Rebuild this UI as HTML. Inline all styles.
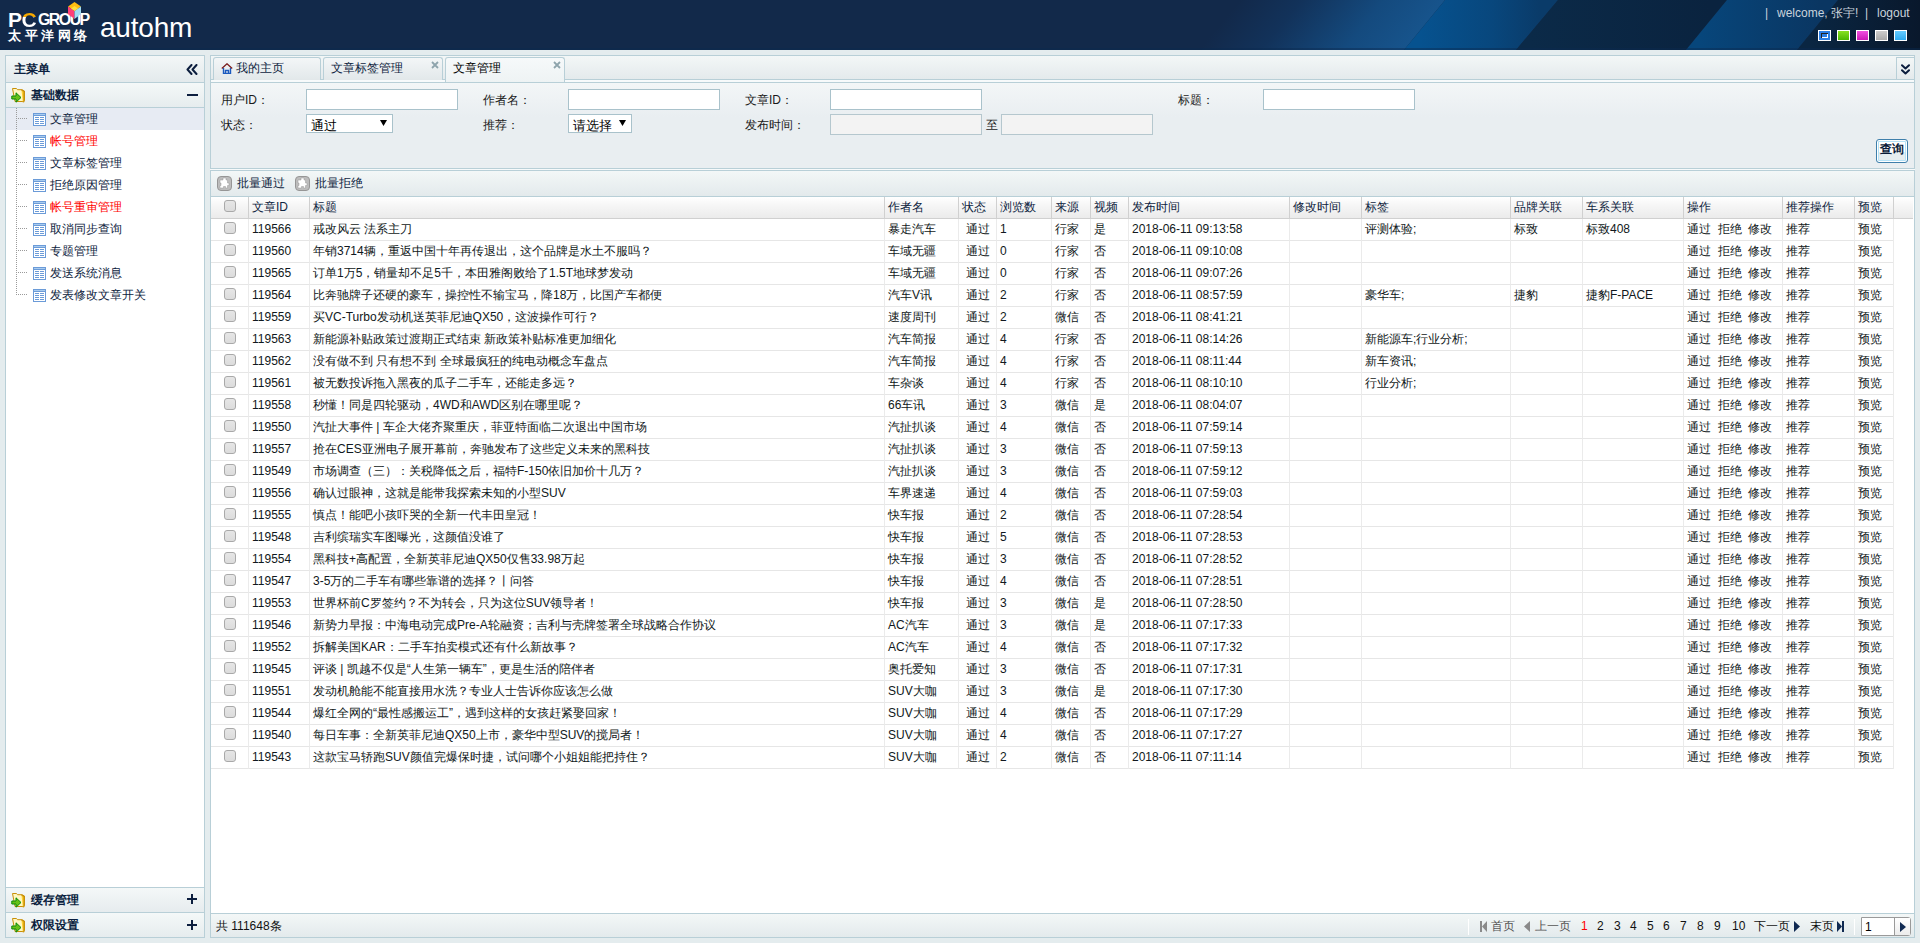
<!DOCTYPE html><html><head><meta charset="utf-8"><title>autohm</title><style>*{margin:0;padding:0;box-sizing:border-box}
html,body{width:1920px;height:943px;overflow:hidden}
body{position:relative;background:#e4ecee;font-family:"Liberation Sans",sans-serif;font-size:12px;color:#000}
i,em{display:block;font-style:normal}
svg{display:block}
#hdr{position:absolute;left:0;top:0;width:1920px;height:50px;overflow:hidden;background:#12284a}
#hdr .bg{position:absolute;left:0;top:0;width:1920px;height:49px}
#hdr .app{position:absolute;left:100px;top:10px;font-size:28px;color:#fff;line-height:36px;letter-spacing:-0.2px}
#hdr .top{position:absolute;top:5px;color:#c9d3dc;font-size:12px;line-height:16px;white-space:nowrap}
#hdr .sw{position:absolute;top:30px;width:13px;height:11px;border:1px solid #fff}
#side{position:absolute;left:5px;top:55px;width:200px;height:883px;border:1px solid #b8cfd7;background:#fff}
.side-title{position:absolute;left:0;top:0;width:198px;height:27px;border-bottom:1px solid #b8cfd7;background:linear-gradient(#f3f7f7,#e3eaec)}
.side-title span{position:absolute;left:8px;top:6px;color:#0b1f3f;line-height:14px;font-weight:bold}
.sec{position:absolute;left:0;width:198px;height:25px;border-bottom:1px solid #b8cfd7;background:linear-gradient(#f4f8f8,#e6ecee)}
.sec b{position:absolute;left:25px;top:5px;color:#0b1f3f;line-height:14px;font-weight:bold}
.sec.top1{top:27px}
.sec.bot1{top:831px;border-top:1px solid #b8cfd7;height:26px}
.sec.bot1 svg{top:4px}
.sec.bot1 b{top:5px}
.sec.bot1 i{margin-top:-1px}
.sec.bot2{top:857px;height:24px;border-bottom:0}
.tree{position:absolute;left:0;top:52px;width:198px}
.vdots{position:absolute;left:10px;top:0;width:1px;height:187px;background:repeating-linear-gradient(#9a9a9a 0,#9a9a9a 1px,transparent 1px,transparent 2px);z-index:2}
.hdots{position:absolute;left:10px;top:10px;width:11px;height:1px;background:repeating-linear-gradient(90deg,#9a9a9a 0,#9a9a9a 1px,transparent 1px,transparent 2px)}
.it{position:relative;height:22px}
.it.sel{background:#e7ebf3}
.it span{position:absolute;left:44px;top:4px;line-height:14px;color:#0e2440;white-space:nowrap}
.it span.red{color:#ff0000}
#tabs{position:absolute;left:210px;top:55px;width:1705px;height:25px;border:1px solid #b8cfd7;background:linear-gradient(#f3f7f7,#e4eaec)}
#tabgap{position:absolute;left:210px;top:80px;width:1705px;height:2px;background:#f7fafb;border-left:1px solid #b8cfd7;border-right:1px solid #b8cfd7}
.tab{position:absolute;top:1px;height:23px;border:1px solid #b8cfd7;border-bottom:0;border-radius:3px 3px 0 0;background:linear-gradient(#f3f6f7,#e2e8ea);color:#0e2440}
.tab span{position:absolute;top:3px;line-height:14px;white-space:nowrap}
.tab.act{background:linear-gradient(#f6f9fa,#eef3f4);height:25px;z-index:2}
.tabdd{position:absolute;right:0;top:1px;width:18px;height:22px;border-left:1px solid #b8cfd7;border-top:1px solid #b8cfd7;background:linear-gradient(#f3f7f7,#e4eaec)}
#form{position:absolute;left:210px;top:82px;width:1705px;height:87px;border:1px solid #b8cfd7;background:linear-gradient(#f3f6f7,#e9eef1 40%,#e9eef1)}
#form .lb{position:absolute;line-height:14px;color:#1a1a1a;white-space:nowrap}
#form .in{position:absolute;width:152px;height:21px;border:1px solid #a9c2cb;background:#fff}
#form .in.dis{background:#f3f3f3;border-color:#b5c7ce}
#form .sel{position:absolute;height:19px;border:1px solid #a9c2cb;background:#fff}
#form .sel span{position:absolute;left:4px;top:3px;line-height:15px;font-size:13px}
#form .btn{position:absolute;left:1665px;top:56px;width:32px;height:24px;border:1px solid #3f7fab;border-radius:3px;box-shadow:inset 0 0 0 1px #fff,inset 0 0 0 2px #b5e2f7;background:linear-gradient(#ffffff,#ffffff 55%,#e6edf0 56%,#e6edf0)}
#form .btn span{position:absolute;left:3px;top:2px;line-height:14px;color:#0a1a38;font-weight:bold}
#gap2{position:absolute;left:210px;top:169px;width:1705px;height:1px;background:#f7fafb}
#grid{position:absolute;left:210px;top:170px;width:1705px;height:768px;border:1px solid #b8cfd7;background:#fff;overflow:hidden}
.tb{position:absolute;left:0;top:0;width:1703px;height:26px;border-bottom:1px solid #b8cfd7;background:linear-gradient(#f3f7f7,#e3eaec)}
.tbb{position:absolute;top:5px;height:17px;white-space:nowrap;color:#0e2440}
.tbb em{position:absolute;left:20px;top:0;line-height:14px}
table{border-collapse:separate;border-spacing:0;table-layout:fixed;position:absolute;left:-1px}
.gh{top:26px}
.gh td{height:22px;border-left:1px solid #d0d0d0;border-bottom:1px solid #d0d0d0;background:linear-gradient(#ffffff,#f6f6f6 40%,#ebebeb);padding:0 0 0 3px;line-height:21px;white-space:nowrap;overflow:hidden;color:#0e2440}
.gb{top:48px}
.gb td{height:22px;border-left:1px solid #ebebeb;border-bottom:1px solid #e6e6e6;padding:0 0 0 3px;line-height:21px;white-space:nowrap;overflow:hidden;color:#101820}
.gb td.last{border-bottom:0;border-left:1px solid #ebebeb}
.gb td.ctr{text-align:center;padding:0}
td.c0{border-left:0 !important;padding:0 !important;vertical-align:top}
.cb{margin:3px 0 0 14px;width:12px;height:12px;border:1px solid #a9a9a9;border-radius:3px;background:linear-gradient(#e6e6e6,#dcdcdc)}
#foot{position:absolute;left:0;bottom:0;width:1703px;height:24px;border-top:1px solid #b8cfd7;background:linear-gradient(#f3f7f7,#e3eaec)}
#foot .tot{position:absolute;left:5px;top:5px;line-height:14px;color:#111}
#foot .pg{position:absolute;top:5px;line-height:14px;white-space:nowrap;color:#111}
#foot .psep{position:absolute;top:5px;width:1px;height:16px;background:#b8cfd7;border-right:1px solid #fff}
#foot .go{position:absolute;left:1650px;top:3px;width:50px;height:19px;border:1px solid #9a9a9a;border-radius:0 3px 3px 0;background:#fff}
#foot .go span{position:absolute;left:3px;top:2px;line-height:14px}
#foot .gob{position:absolute;left:32px;top:0;width:16px;height:17px;border-left:1px solid #9a9a9a;background:linear-gradient(#fff,#ececec)}
</style></head><body><div id="hdr">
<svg width="1920" height="50" viewBox="0 0 1920 50" style="position:absolute;left:0;top:0">
<defs>
<linearGradient id="g0" x1="1240" y1="0" x2="1364" y2="101" gradientUnits="userSpaceOnUse"><stop offset="0" stop-color="#12294a"/><stop offset="0.3" stop-color="#12325a"/><stop offset="0.7" stop-color="#144a7e"/><stop offset="1" stop-color="#17548c"/></linearGradient>
<linearGradient id="g1" x1="1420" y1="0" x2="1540" y2="0" gradientUnits="userSpaceOnUse"><stop offset="0" stop-color="#06528f"/><stop offset="0.6" stop-color="#08477d"/><stop offset="1" stop-color="#0a3b69"/></linearGradient>
<linearGradient id="g2" x1="1530" y1="0" x2="1710" y2="0" gradientUnits="userSpaceOnUse"><stop offset="0" stop-color="#0b2a48"/><stop offset="1" stop-color="#0a233f"/></linearGradient>
<linearGradient id="g3" x1="1700" y1="0" x2="1820" y2="0" gradientUnits="userSpaceOnUse"><stop offset="0" stop-color="#07467b"/><stop offset="1" stop-color="#0a3662"/></linearGradient>
<linearGradient id="g4" x1="1810" y1="0" x2="1920" y2="0" gradientUnits="userSpaceOnUse"><stop offset="0" stop-color="#0a2642"/><stop offset="1" stop-color="#09182c"/></linearGradient>
</defs>
<rect x="0" y="0" width="1920" height="50" fill="#12294a"/>
<polygon points="1200,0 1445,0 1404,50 1200,50" fill="url(#g0)"/>
<polygon points="1445,0 1558,0 1516,50 1404,50" fill="url(#g1)"/>
<polygon points="1558,0 1727,0 1686,50 1516,50" fill="url(#g2)"/>
<polygon points="1727,0 1838,0 1797,50 1686,50" fill="url(#g3)"/>
<polygon points="1838,0 1920,0 1920,50 1797,50" fill="url(#g4)"/>
<rect x="0" y="48" width="1920" height="2" fill="#0a2a50" opacity="0.45"/>
</svg>
<span style="position:absolute;left:8px;top:8px;font-size:21px;font-weight:bold;color:#fff;line-height:24px;white-space:nowrap;letter-spacing:-0.5px">P<span style="background:linear-gradient(#f5a800 0,#f5a800 40%,#fff 40%);-webkit-background-clip:text;color:transparent">C</span></span>
<span style="position:absolute;left:38px;top:10px;font-size:16px;font-weight:bold;color:#fff;line-height:20px;letter-spacing:-1.6px;white-space:nowrap">GROUP</span>
<svg width="14" height="18" viewBox="0 0 14 18" style="position:absolute;left:68px;top:1px"><polygon points="6.5,1 13,5.5 6.5,10 0,5.5" fill="#ffbe10"/><polygon points="0,5.5 6.5,10 6.5,18 0,13" fill="#ff3f78"/><polygon points="13,5.5 13,13 6.5,18 6.5,10" fill="#9fdcf5"/><polygon points="3,7.5 6.5,10 10,7.5 6.5,5" fill="#ffe040"/></svg>
<span style="position:absolute;left:8px;top:29px;font-size:13px;font-weight:bold;color:#fff;letter-spacing:3.5px;line-height:14px;white-space:nowrap">太平洋网络</span>
<div class="app">autohm</div>
<span class="top" style="left:1765px">|</span>
<span class="top" style="left:1777px">welcome, 张宇!</span>
<span class="top" style="left:1865px">|</span>
<span class="top" style="left:1877px">logout</span>
<i class="sw" style="left:1818px;background:#2a7ee6"><i style="position:absolute;left:2px;top:2px;width:7px;height:5px;border-left:1px solid #222;border-top:1px solid #222;background:#fff"></i><i style="position:absolute;left:3px;top:3px;width:5px;height:3px;background:#2a7ee6"></i></i>
<i class="sw" style="left:1837px;background:linear-gradient(#88e020,#4cb800)"></i>
<i class="sw" style="left:1856px;background:linear-gradient(#f050e0,#cc18b8)"></i>
<i class="sw" style="left:1875px;background:linear-gradient(#cccccc,#a8a8a8)"></i>
<i class="sw" style="left:1894px;background:linear-gradient(#66ccff,#2eaaf0)"></i>
</div>
<div id="side"><div class="side-title"><span>主菜单</span><svg width="12" height="11" viewBox="0 0 12 11" style="position:absolute;left:180px;top:8px"><path d="M5.5 1L1.5 5.5 5.5 10M10.5 1L6.5 5.5 10.5 10" fill="none" stroke="#0c1e3e" stroke-width="2" stroke-linecap="round" stroke-linejoin="round"/></svg></div><div class="sec top1"><svg width="16" height="16" viewBox="0 0 16 16" style="position:absolute;left:5px;top:4px"><path d="M1.5 1.5h4l1 1.2h4.5l2.5 1.3v9.5c0 .8-.6 1-1.5 1h-8z" fill="#fff7c0" stroke="#c8900a" stroke-width="1"/><path d="M10.5 3l2.5 1.5v9.5c0 .6-.5 1-1.2 1" fill="#ffd030" stroke="#c8900a" stroke-width="1.2"/><path d="M0.8 9h4.2v-3.2l5 4.7-5 4.7v-3.2h-4.2z" fill="#66c018" stroke="#0a8a0a" stroke-width="1"/></svg><b>基础数据</b><i style="position:absolute;left:181px;top:11px;width:11px;height:2px;background:#0c1e3e"></i></div><div class="tree"><i class="vdots"></i><div class="it sel"><i class="hdots"></i><svg width="13" height="13" viewBox="0 0 13 13" shape-rendering="crispEdges" style="position:absolute;left:27px;top:5px"><rect x="0" y="0" width="13" height="13" fill="#6b9bd8"/><rect x="1" y="1" width="11" height="1" fill="#a9ccf0"/><rect x="1" y="3" width="11" height="9" fill="#fff"/><g fill="#6b9bd8"><rect x="2" y="4" width="4" height="1"/><rect x="7" y="4" width="4" height="1"/><rect x="2" y="6" width="4" height="1"/><rect x="7" y="6" width="4" height="1"/><rect x="2" y="8" width="4" height="1"/><rect x="7" y="8" width="4" height="1"/><rect x="2" y="10" width="4" height="1"/><rect x="7" y="10" width="4" height="1"/></g></svg><span>文章管理</span></div><div class="it"><i class="hdots"></i><svg width="13" height="13" viewBox="0 0 13 13" shape-rendering="crispEdges" style="position:absolute;left:27px;top:5px"><rect x="0" y="0" width="13" height="13" fill="#6b9bd8"/><rect x="1" y="1" width="11" height="1" fill="#a9ccf0"/><rect x="1" y="3" width="11" height="9" fill="#fff"/><g fill="#6b9bd8"><rect x="2" y="4" width="4" height="1"/><rect x="7" y="4" width="4" height="1"/><rect x="2" y="6" width="4" height="1"/><rect x="7" y="6" width="4" height="1"/><rect x="2" y="8" width="4" height="1"/><rect x="7" y="8" width="4" height="1"/><rect x="2" y="10" width="4" height="1"/><rect x="7" y="10" width="4" height="1"/></g></svg><span class="red">帐号管理</span></div><div class="it"><i class="hdots"></i><svg width="13" height="13" viewBox="0 0 13 13" shape-rendering="crispEdges" style="position:absolute;left:27px;top:5px"><rect x="0" y="0" width="13" height="13" fill="#6b9bd8"/><rect x="1" y="1" width="11" height="1" fill="#a9ccf0"/><rect x="1" y="3" width="11" height="9" fill="#fff"/><g fill="#6b9bd8"><rect x="2" y="4" width="4" height="1"/><rect x="7" y="4" width="4" height="1"/><rect x="2" y="6" width="4" height="1"/><rect x="7" y="6" width="4" height="1"/><rect x="2" y="8" width="4" height="1"/><rect x="7" y="8" width="4" height="1"/><rect x="2" y="10" width="4" height="1"/><rect x="7" y="10" width="4" height="1"/></g></svg><span>文章标签管理</span></div><div class="it"><i class="hdots"></i><svg width="13" height="13" viewBox="0 0 13 13" shape-rendering="crispEdges" style="position:absolute;left:27px;top:5px"><rect x="0" y="0" width="13" height="13" fill="#6b9bd8"/><rect x="1" y="1" width="11" height="1" fill="#a9ccf0"/><rect x="1" y="3" width="11" height="9" fill="#fff"/><g fill="#6b9bd8"><rect x="2" y="4" width="4" height="1"/><rect x="7" y="4" width="4" height="1"/><rect x="2" y="6" width="4" height="1"/><rect x="7" y="6" width="4" height="1"/><rect x="2" y="8" width="4" height="1"/><rect x="7" y="8" width="4" height="1"/><rect x="2" y="10" width="4" height="1"/><rect x="7" y="10" width="4" height="1"/></g></svg><span>拒绝原因管理</span></div><div class="it"><i class="hdots"></i><svg width="13" height="13" viewBox="0 0 13 13" shape-rendering="crispEdges" style="position:absolute;left:27px;top:5px"><rect x="0" y="0" width="13" height="13" fill="#6b9bd8"/><rect x="1" y="1" width="11" height="1" fill="#a9ccf0"/><rect x="1" y="3" width="11" height="9" fill="#fff"/><g fill="#6b9bd8"><rect x="2" y="4" width="4" height="1"/><rect x="7" y="4" width="4" height="1"/><rect x="2" y="6" width="4" height="1"/><rect x="7" y="6" width="4" height="1"/><rect x="2" y="8" width="4" height="1"/><rect x="7" y="8" width="4" height="1"/><rect x="2" y="10" width="4" height="1"/><rect x="7" y="10" width="4" height="1"/></g></svg><span class="red">帐号重审管理</span></div><div class="it"><i class="hdots"></i><svg width="13" height="13" viewBox="0 0 13 13" shape-rendering="crispEdges" style="position:absolute;left:27px;top:5px"><rect x="0" y="0" width="13" height="13" fill="#6b9bd8"/><rect x="1" y="1" width="11" height="1" fill="#a9ccf0"/><rect x="1" y="3" width="11" height="9" fill="#fff"/><g fill="#6b9bd8"><rect x="2" y="4" width="4" height="1"/><rect x="7" y="4" width="4" height="1"/><rect x="2" y="6" width="4" height="1"/><rect x="7" y="6" width="4" height="1"/><rect x="2" y="8" width="4" height="1"/><rect x="7" y="8" width="4" height="1"/><rect x="2" y="10" width="4" height="1"/><rect x="7" y="10" width="4" height="1"/></g></svg><span>取消同步查询</span></div><div class="it"><i class="hdots"></i><svg width="13" height="13" viewBox="0 0 13 13" shape-rendering="crispEdges" style="position:absolute;left:27px;top:5px"><rect x="0" y="0" width="13" height="13" fill="#6b9bd8"/><rect x="1" y="1" width="11" height="1" fill="#a9ccf0"/><rect x="1" y="3" width="11" height="9" fill="#fff"/><g fill="#6b9bd8"><rect x="2" y="4" width="4" height="1"/><rect x="7" y="4" width="4" height="1"/><rect x="2" y="6" width="4" height="1"/><rect x="7" y="6" width="4" height="1"/><rect x="2" y="8" width="4" height="1"/><rect x="7" y="8" width="4" height="1"/><rect x="2" y="10" width="4" height="1"/><rect x="7" y="10" width="4" height="1"/></g></svg><span>专题管理</span></div><div class="it"><i class="hdots"></i><svg width="13" height="13" viewBox="0 0 13 13" shape-rendering="crispEdges" style="position:absolute;left:27px;top:5px"><rect x="0" y="0" width="13" height="13" fill="#6b9bd8"/><rect x="1" y="1" width="11" height="1" fill="#a9ccf0"/><rect x="1" y="3" width="11" height="9" fill="#fff"/><g fill="#6b9bd8"><rect x="2" y="4" width="4" height="1"/><rect x="7" y="4" width="4" height="1"/><rect x="2" y="6" width="4" height="1"/><rect x="7" y="6" width="4" height="1"/><rect x="2" y="8" width="4" height="1"/><rect x="7" y="8" width="4" height="1"/><rect x="2" y="10" width="4" height="1"/><rect x="7" y="10" width="4" height="1"/></g></svg><span>发送系统消息</span></div><div class="it"><i class="hdots"></i><svg width="13" height="13" viewBox="0 0 13 13" shape-rendering="crispEdges" style="position:absolute;left:27px;top:5px"><rect x="0" y="0" width="13" height="13" fill="#6b9bd8"/><rect x="1" y="1" width="11" height="1" fill="#a9ccf0"/><rect x="1" y="3" width="11" height="9" fill="#fff"/><g fill="#6b9bd8"><rect x="2" y="4" width="4" height="1"/><rect x="7" y="4" width="4" height="1"/><rect x="2" y="6" width="4" height="1"/><rect x="7" y="6" width="4" height="1"/><rect x="2" y="8" width="4" height="1"/><rect x="7" y="8" width="4" height="1"/><rect x="2" y="10" width="4" height="1"/><rect x="7" y="10" width="4" height="1"/></g></svg><span>发表修改文章开关</span></div></div><div class="sec bot1"><svg width="16" height="16" viewBox="0 0 16 16" style="position:absolute;left:5px;top:4px"><path d="M1.5 1.5h4l1 1.2h4.5l2.5 1.3v9.5c0 .8-.6 1-1.5 1h-8z" fill="#fff7c0" stroke="#c8900a" stroke-width="1"/><path d="M10.5 3l2.5 1.5v9.5c0 .6-.5 1-1.2 1" fill="#ffd030" stroke="#c8900a" stroke-width="1.2"/><path d="M0.8 9h4.2v-3.2l5 4.7-5 4.7v-3.2h-4.2z" fill="#66c018" stroke="#0a8a0a" stroke-width="1"/></svg><b>缓存管理</b><i style="position:absolute;left:181px;top:11px;width:10px;height:2px;background:#0c1e3e"></i><i style="position:absolute;left:185px;top:7px;width:2px;height:10px;background:#0c1e3e"></i></div><div class="sec bot2"><svg width="16" height="16" viewBox="0 0 16 16" style="position:absolute;left:5px;top:4px"><path d="M1.5 1.5h4l1 1.2h4.5l2.5 1.3v9.5c0 .8-.6 1-1.5 1h-8z" fill="#fff7c0" stroke="#c8900a" stroke-width="1"/><path d="M10.5 3l2.5 1.5v9.5c0 .6-.5 1-1.2 1" fill="#ffd030" stroke="#c8900a" stroke-width="1.2"/><path d="M0.8 9h4.2v-3.2l5 4.7-5 4.7v-3.2h-4.2z" fill="#66c018" stroke="#0a8a0a" stroke-width="1"/></svg><b>权限设置</b><i style="position:absolute;left:181px;top:11px;width:10px;height:2px;background:#0c1e3e"></i><i style="position:absolute;left:185px;top:7px;width:2px;height:10px;background:#0c1e3e"></i></div></div><div id="tabs"><div class="tab" style="left:2px;width:108px"><svg width="12" height="11" viewBox="0 0 12 11" style="position:absolute;left:7px;top:5px"><path d="M0.8 5.6L6 0.8 11.2 5.6" fill="none" stroke="#7a1c1c" stroke-width="1.3"/><path d="M2.5 5v5.5h7V5M4.5 10.5V7.5h3v3" fill="none" stroke="#1a5abf" stroke-width="1.4"/></svg><span style="left:22px">我的主页</span></div><div class="tab" style="left:112px;width:120px"><span style="left:7px">文章标签管理</span><svg width="8" height="8" viewBox="0 0 8 8" style="position:absolute;right:3px;top:3px"><path d="M1 1L7 7M7 1L1 7" stroke="#8ea4ac" stroke-width="1.8"/></svg></div><div class="tab act" style="left:234px;width:120px"><span style="left:7px;color:#000">文章管理</span><svg width="8" height="8" viewBox="0 0 8 8" style="position:absolute;right:3px;top:3px"><path d="M1 1L7 7M7 1L1 7" stroke="#8ea4ac" stroke-width="1.8"/></svg></div><div class="tabdd"><svg width="9" height="11" viewBox="0 0 9 11" style="position:absolute;left:4px;top:6px"><path d="M1 1.2L4.5 4.5 8 1.2M1 6.2L4.5 9.5 8 6.2" fill="none" stroke="#0c1e3e" stroke-width="2" stroke-linecap="round" stroke-linejoin="round"/></svg></div></div><div id="tabgap"></div><div id="form">
<span class="lb" style="left:10px;top:10px">用户ID：</span>
<i class="in" style="left:95px;top:6px"></i>
<span class="lb" style="left:272px;top:10px">作者名：</span>
<i class="in" style="left:357px;top:6px"></i>
<span class="lb" style="left:534px;top:10px">文章ID：</span>
<i class="in" style="left:619px;top:6px"></i>
<span class="lb" style="left:967px;top:10px">标题：</span>
<i class="in" style="left:1052px;top:6px"></i>
<span class="lb" style="left:10px;top:35px">状态：</span>
<div class="sel" style="left:95px;top:31px;width:87px"><span>通过</span><svg width="7" height="6" viewBox="0 0 7 6" style="position:absolute;top:5px;right:5px"><path d="M0 0h7L3.5 6z" fill="#000"/></svg></div>
<span class="lb" style="left:272px;top:35px">推荐：</span>
<div class="sel" style="left:357px;top:31px;width:64px"><span>请选择</span><svg width="7" height="6" viewBox="0 0 7 6" style="position:absolute;top:5px;right:5px"><path d="M0 0h7L3.5 6z" fill="#000"/></svg></div>
<span class="lb" style="left:534px;top:35px">发布时间：</span>
<i class="in dis" style="left:619px;top:31px"></i>
<span class="lb" style="left:775px;top:35px">至</span>
<i class="in dis" style="left:790px;top:31px"></i>
<div class="btn"><span>查询</span></div>
</div>
<div id="gap2"></div>
<div id="grid"><div class="tb"><span class="tbb" style="left:6px"><svg width="15" height="15" viewBox="0 0 15 15" style="position:absolute;left:0;top:0"><rect x="0.5" y="0.5" width="14" height="14" rx="3.5" fill="#bdbdbd" stroke="#969696"/><path d="M3 4H6V2H9V4H10.5V7H12V9.5H10.5V12H8.5V10.5H6.5V12H3V9.5H4V7H3Z" fill="#fff" stroke="#9a9a9a" stroke-width="0.5"/></svg><em>批量通过</em></span><span class="tbb" style="left:84px"><svg width="15" height="15" viewBox="0 0 15 15" style="position:absolute;left:0;top:0"><rect x="0.5" y="0.5" width="14" height="14" rx="3.5" fill="#bdbdbd" stroke="#969696"/><path d="M3 4H6V2H9V4H10.5V7H12V9.5H10.5V12H8.5V10.5H6.5V12H3V9.5H4V7H3Z" fill="#fff" stroke="#9a9a9a" stroke-width="0.5"/></svg><em>批量拒绝</em></span></div><table class="gh"><colgroup><col style="width:38px"><col style="width:61px"><col style="width:575px"><col style="width:74px"><col style="width:38px"><col style="width:55px"><col style="width:39px"><col style="width:38px"><col style="width:161px"><col style="width:72px"><col style="width:149px"><col style="width:72px"><col style="width:101px"><col style="width:99px"><col style="width:72px"><col style="width:39px"><col style="width:20px"></colgroup><tr><td class="c0"><i class="cb"></i></td><td>文章ID</td><td>标题</td><td>作者名</td><td>状态</td><td>浏览数</td><td>来源</td><td>视频</td><td>发布时间</td><td>修改时间</td><td>标签</td><td>品牌关联</td><td>车系关联</td><td>操作</td><td>推荐操作</td><td>预览</td><td class="lasth"></td></tr></table><table class="gb"><colgroup><col style="width:38px"><col style="width:61px"><col style="width:575px"><col style="width:74px"><col style="width:38px"><col style="width:55px"><col style="width:39px"><col style="width:38px"><col style="width:161px"><col style="width:72px"><col style="width:149px"><col style="width:72px"><col style="width:101px"><col style="width:99px"><col style="width:72px"><col style="width:39px"><col style="width:20px"></colgroup><tr><td class="c0"><i class="cb"></i></td><td>119566</td><td>戒改风云 法系主刀</td><td>暴走汽车</td><td class="ctr">通过</td><td>1</td><td>行家</td><td>是</td><td>2018-06-11 09:13:58</td><td></td><td>评测体验;</td><td>标致</td><td>标致408</td><td class="ops">通过&nbsp;&nbsp;拒绝&nbsp;&nbsp;修改</td><td>推荐</td><td>预览</td><td class="last"></td></tr><tr><td class="c0"><i class="cb"></i></td><td>119560</td><td>年销3714辆，重返中国十年再传退出，这个品牌是水土不服吗？</td><td>车域无疆</td><td class="ctr">通过</td><td>0</td><td>行家</td><td>否</td><td>2018-06-11 09:10:08</td><td></td><td></td><td></td><td></td><td class="ops">通过&nbsp;&nbsp;拒绝&nbsp;&nbsp;修改</td><td>推荐</td><td>预览</td><td class="last"></td></tr><tr><td class="c0"><i class="cb"></i></td><td>119565</td><td>订单1万5，销量却不足5千，本田雅阁败给了1.5T地球梦发动</td><td>车域无疆</td><td class="ctr">通过</td><td>0</td><td>行家</td><td>否</td><td>2018-06-11 09:07:26</td><td></td><td></td><td></td><td></td><td class="ops">通过&nbsp;&nbsp;拒绝&nbsp;&nbsp;修改</td><td>推荐</td><td>预览</td><td class="last"></td></tr><tr><td class="c0"><i class="cb"></i></td><td>119564</td><td>比奔驰牌子还硬的豪车，操控性不输宝马，降18万，比国产车都便</td><td>汽车V讯</td><td class="ctr">通过</td><td>2</td><td>行家</td><td>否</td><td>2018-06-11 08:57:59</td><td></td><td>豪华车;</td><td>捷豹</td><td>捷豹F-PACE</td><td class="ops">通过&nbsp;&nbsp;拒绝&nbsp;&nbsp;修改</td><td>推荐</td><td>预览</td><td class="last"></td></tr><tr><td class="c0"><i class="cb"></i></td><td>119559</td><td>买VC-Turbo发动机送英菲尼迪QX50，这波操作可行？</td><td>速度周刊</td><td class="ctr">通过</td><td>2</td><td>微信</td><td>否</td><td>2018-06-11 08:41:21</td><td></td><td></td><td></td><td></td><td class="ops">通过&nbsp;&nbsp;拒绝&nbsp;&nbsp;修改</td><td>推荐</td><td>预览</td><td class="last"></td></tr><tr><td class="c0"><i class="cb"></i></td><td>119563</td><td>新能源补贴政策过渡期正式结束 新政策补贴标准更加细化</td><td>汽车简报</td><td class="ctr">通过</td><td>4</td><td>行家</td><td>否</td><td>2018-06-11 08:14:26</td><td></td><td>新能源车;行业分析;</td><td></td><td></td><td class="ops">通过&nbsp;&nbsp;拒绝&nbsp;&nbsp;修改</td><td>推荐</td><td>预览</td><td class="last"></td></tr><tr><td class="c0"><i class="cb"></i></td><td>119562</td><td>没有做不到 只有想不到 全球最疯狂的纯电动概念车盘点</td><td>汽车简报</td><td class="ctr">通过</td><td>4</td><td>行家</td><td>否</td><td>2018-06-11 08:11:44</td><td></td><td>新车资讯;</td><td></td><td></td><td class="ops">通过&nbsp;&nbsp;拒绝&nbsp;&nbsp;修改</td><td>推荐</td><td>预览</td><td class="last"></td></tr><tr><td class="c0"><i class="cb"></i></td><td>119561</td><td>被无数投诉拖入黑夜的瓜子二手车，还能走多远？</td><td>车杂谈</td><td class="ctr">通过</td><td>4</td><td>行家</td><td>否</td><td>2018-06-11 08:10:10</td><td></td><td>行业分析;</td><td></td><td></td><td class="ops">通过&nbsp;&nbsp;拒绝&nbsp;&nbsp;修改</td><td>推荐</td><td>预览</td><td class="last"></td></tr><tr><td class="c0"><i class="cb"></i></td><td>119558</td><td>秒懂！同是四轮驱动，4WD和AWD区别在哪里呢？</td><td>66车讯</td><td class="ctr">通过</td><td>3</td><td>微信</td><td>是</td><td>2018-06-11 08:04:07</td><td></td><td></td><td></td><td></td><td class="ops">通过&nbsp;&nbsp;拒绝&nbsp;&nbsp;修改</td><td>推荐</td><td>预览</td><td class="last"></td></tr><tr><td class="c0"><i class="cb"></i></td><td>119550</td><td>汽扯大事件 | 车企大佬齐聚重庆，菲亚特面临二次退出中国市场</td><td>汽扯扒谈</td><td class="ctr">通过</td><td>4</td><td>微信</td><td>否</td><td>2018-06-11 07:59:14</td><td></td><td></td><td></td><td></td><td class="ops">通过&nbsp;&nbsp;拒绝&nbsp;&nbsp;修改</td><td>推荐</td><td>预览</td><td class="last"></td></tr><tr><td class="c0"><i class="cb"></i></td><td>119557</td><td>抢在CES亚洲电子展开幕前，奔驰发布了这些定义未来的黑科技</td><td>汽扯扒谈</td><td class="ctr">通过</td><td>3</td><td>微信</td><td>否</td><td>2018-06-11 07:59:13</td><td></td><td></td><td></td><td></td><td class="ops">通过&nbsp;&nbsp;拒绝&nbsp;&nbsp;修改</td><td>推荐</td><td>预览</td><td class="last"></td></tr><tr><td class="c0"><i class="cb"></i></td><td>119549</td><td>市场调查（三）：关税降低之后，福特F-150依旧加价十几万？</td><td>汽扯扒谈</td><td class="ctr">通过</td><td>3</td><td>微信</td><td>否</td><td>2018-06-11 07:59:12</td><td></td><td></td><td></td><td></td><td class="ops">通过&nbsp;&nbsp;拒绝&nbsp;&nbsp;修改</td><td>推荐</td><td>预览</td><td class="last"></td></tr><tr><td class="c0"><i class="cb"></i></td><td>119556</td><td>确认过眼神，这就是能带我探索未知的小型SUV</td><td>车界速递</td><td class="ctr">通过</td><td>4</td><td>微信</td><td>否</td><td>2018-06-11 07:59:03</td><td></td><td></td><td></td><td></td><td class="ops">通过&nbsp;&nbsp;拒绝&nbsp;&nbsp;修改</td><td>推荐</td><td>预览</td><td class="last"></td></tr><tr><td class="c0"><i class="cb"></i></td><td>119555</td><td>慎点！能吧小孩吓哭的全新一代丰田皇冠！</td><td>快车报</td><td class="ctr">通过</td><td>2</td><td>微信</td><td>否</td><td>2018-06-11 07:28:54</td><td></td><td></td><td></td><td></td><td class="ops">通过&nbsp;&nbsp;拒绝&nbsp;&nbsp;修改</td><td>推荐</td><td>预览</td><td class="last"></td></tr><tr><td class="c0"><i class="cb"></i></td><td>119548</td><td>吉利缤瑞实车图曝光，这颜值没谁了</td><td>快车报</td><td class="ctr">通过</td><td>5</td><td>微信</td><td>否</td><td>2018-06-11 07:28:53</td><td></td><td></td><td></td><td></td><td class="ops">通过&nbsp;&nbsp;拒绝&nbsp;&nbsp;修改</td><td>推荐</td><td>预览</td><td class="last"></td></tr><tr><td class="c0"><i class="cb"></i></td><td>119554</td><td>黑科技+高配置，全新英菲尼迪QX50仅售33.98万起</td><td>快车报</td><td class="ctr">通过</td><td>3</td><td>微信</td><td>否</td><td>2018-06-11 07:28:52</td><td></td><td></td><td></td><td></td><td class="ops">通过&nbsp;&nbsp;拒绝&nbsp;&nbsp;修改</td><td>推荐</td><td>预览</td><td class="last"></td></tr><tr><td class="c0"><i class="cb"></i></td><td>119547</td><td>3-5万的二手车有哪些靠谱的选择？丨问答</td><td>快车报</td><td class="ctr">通过</td><td>4</td><td>微信</td><td>否</td><td>2018-06-11 07:28:51</td><td></td><td></td><td></td><td></td><td class="ops">通过&nbsp;&nbsp;拒绝&nbsp;&nbsp;修改</td><td>推荐</td><td>预览</td><td class="last"></td></tr><tr><td class="c0"><i class="cb"></i></td><td>119553</td><td>世界杯前C罗签约？不为转会，只为这位SUV领导者！</td><td>快车报</td><td class="ctr">通过</td><td>3</td><td>微信</td><td>是</td><td>2018-06-11 07:28:50</td><td></td><td></td><td></td><td></td><td class="ops">通过&nbsp;&nbsp;拒绝&nbsp;&nbsp;修改</td><td>推荐</td><td>预览</td><td class="last"></td></tr><tr><td class="c0"><i class="cb"></i></td><td>119546</td><td>新势力早报：中海电动完成Pre-A轮融资；吉利与壳牌签署全球战略合作协议</td><td>AC汽车</td><td class="ctr">通过</td><td>3</td><td>微信</td><td>是</td><td>2018-06-11 07:17:33</td><td></td><td></td><td></td><td></td><td class="ops">通过&nbsp;&nbsp;拒绝&nbsp;&nbsp;修改</td><td>推荐</td><td>预览</td><td class="last"></td></tr><tr><td class="c0"><i class="cb"></i></td><td>119552</td><td>拆解美国KAR：二手车拍卖模式还有什么新故事？</td><td>AC汽车</td><td class="ctr">通过</td><td>4</td><td>微信</td><td>否</td><td>2018-06-11 07:17:32</td><td></td><td></td><td></td><td></td><td class="ops">通过&nbsp;&nbsp;拒绝&nbsp;&nbsp;修改</td><td>推荐</td><td>预览</td><td class="last"></td></tr><tr><td class="c0"><i class="cb"></i></td><td>119545</td><td>评谈 | 凯越不仅是“人生第一辆车”，更是生活的陪伴者</td><td>奥托爱知</td><td class="ctr">通过</td><td>3</td><td>微信</td><td>否</td><td>2018-06-11 07:17:31</td><td></td><td></td><td></td><td></td><td class="ops">通过&nbsp;&nbsp;拒绝&nbsp;&nbsp;修改</td><td>推荐</td><td>预览</td><td class="last"></td></tr><tr><td class="c0"><i class="cb"></i></td><td>119551</td><td>发动机舱能不能直接用水洗？专业人士告诉你应该怎么做</td><td>SUV大咖</td><td class="ctr">通过</td><td>3</td><td>微信</td><td>是</td><td>2018-06-11 07:17:30</td><td></td><td></td><td></td><td></td><td class="ops">通过&nbsp;&nbsp;拒绝&nbsp;&nbsp;修改</td><td>推荐</td><td>预览</td><td class="last"></td></tr><tr><td class="c0"><i class="cb"></i></td><td>119544</td><td>爆红全网的“最性感搬运工”，遇到这样的女孩赶紧娶回家！</td><td>SUV大咖</td><td class="ctr">通过</td><td>4</td><td>微信</td><td>否</td><td>2018-06-11 07:17:29</td><td></td><td></td><td></td><td></td><td class="ops">通过&nbsp;&nbsp;拒绝&nbsp;&nbsp;修改</td><td>推荐</td><td>预览</td><td class="last"></td></tr><tr><td class="c0"><i class="cb"></i></td><td>119540</td><td>每日车事：全新英菲尼迪QX50上市，豪华中型SUV的搅局者！</td><td>SUV大咖</td><td class="ctr">通过</td><td>4</td><td>微信</td><td>否</td><td>2018-06-11 07:17:27</td><td></td><td></td><td></td><td></td><td class="ops">通过&nbsp;&nbsp;拒绝&nbsp;&nbsp;修改</td><td>推荐</td><td>预览</td><td class="last"></td></tr><tr><td class="c0"><i class="cb"></i></td><td>119543</td><td>这款宝马轿跑SUV颜值完爆保时捷，试问哪个小姐姐能把持住？</td><td>SUV大咖</td><td class="ctr">通过</td><td>2</td><td>微信</td><td>否</td><td>2018-06-11 07:11:14</td><td></td><td></td><td></td><td></td><td class="ops">通过&nbsp;&nbsp;拒绝&nbsp;&nbsp;修改</td><td>推荐</td><td>预览</td><td class="last"></td></tr></table><div id="foot">
<span class="tot">共 111648条</span>
<i class="psep" style="left:1257px"></i>
<svg width="7" height="11" viewBox="0 0 7 11" style="position:absolute;left:1269px;top:7px"><rect x="0" y="0" width="2" height="11" fill="#8a8a8a"/><path d="M7 0v11L2 5.5z" fill="#8a8a8a"/></svg>
<span class="pg" style="left:1280px;color:#555">首页</span>
<svg width="6" height="11" viewBox="0 0 6 11" style="position:absolute;left:1313px;top:7px"><path d="M6 0v11L0 5.5z" fill="#8a8a8a"/></svg>
<span class="pg" style="left:1324px;color:#555">上一页</span>
<span class="pg" style="left:1370px;color:#f00">1</span>
<span class="pg" style="left:1386px">2</span>
<span class="pg" style="left:1403px">3</span>
<span class="pg" style="left:1419px">4</span>
<span class="pg" style="left:1436px">5</span>
<span class="pg" style="left:1452px">6</span>
<span class="pg" style="left:1469px">7</span>
<span class="pg" style="left:1486px">8</span>
<span class="pg" style="left:1503px">9</span>
<span class="pg" style="left:1521px">10</span>
<span class="pg" style="left:1543px">下一页</span>
<svg width="6" height="11" viewBox="0 0 6 11" style="position:absolute;left:1583px;top:7px"><path d="M0 0v11L6 5.5z" fill="#102a52"/></svg>
<span class="pg" style="left:1599px">末页</span>
<svg width="7" height="11" viewBox="0 0 7 11" style="position:absolute;left:1626px;top:7px"><path d="M0 0v11L5 5.5z" fill="#102a52"/><rect x="5" y="0" width="2" height="11" fill="#102a52"/></svg>
<i class="psep" style="left:1643px"></i>
<div class="go"><span>1</span><i class="gob"><svg width="6" height="10" viewBox="0 0 6 10" style="position:absolute;left:5px;top:4px"><path d="M0 0v10L6 5z" fill="#102a52"/></svg></i></div>
</div>
</div></body></html>
